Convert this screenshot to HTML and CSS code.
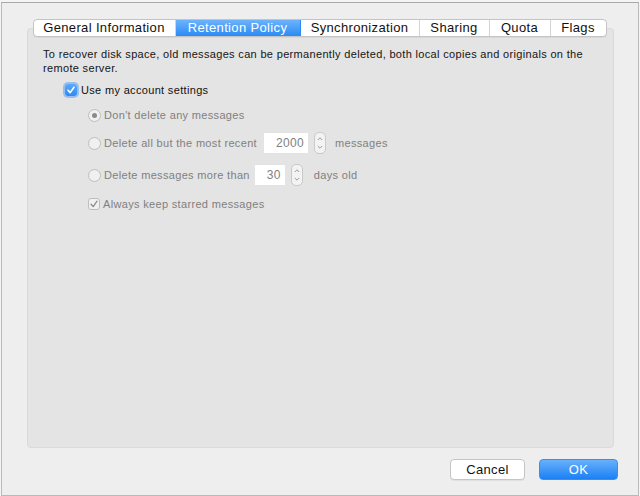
FILE: index.html
```html
<!DOCTYPE html>
<html>
<head>
<meta charset="utf-8">
<link rel="stylesheet" href="styles.css">
</head>
<body>
<div class="dialog">
  <div class="tabs">
    <div class="tab t1">General Information</div>
    <div class="tab t2 sel">Retention Policy</div>
    <div class="tab t3">Synchronization</div>
    <div class="tab t4">Sharing</div>
    <div class="tab t5">Quota</div>
    <div class="tab t6 last">Flags</div>
  </div>
  <div class="panel">
    <p class="desc">To recover disk space, old messages can be permanently deleted, both local copies and originals on the remote server.</p>
    <div class="row main-check">
      <span class="check on">
        <svg width="10" height="10" viewBox="0 0 10 10"><path d="M2 5.2 L4.2 7.6 L8 2.2" fill="none" stroke="#fff" stroke-width="1.6" stroke-linecap="round" stroke-linejoin="round"/></svg>
      </span>
      <span class="label">Use my account settings</span>
    </div>
    <div class="options">
      <div class="row r1">
        <span class="radio selected"><span class="dot"></span></span>
        <span class="label dis">Don't delete any messages</span>
      </div>
      <div class="row r2">
        <span class="radio"></span>
        <span class="label dis">Delete all but the most recent</span>
        <span class="field">2000</span>
        <span class="stepper">
          <svg width="12" height="22" viewBox="0 0 12 22"><path d="M3.8 8 L6 5.8 L8.2 8" fill="none" stroke="#9a9a9a" stroke-width="1"/><path d="M3.8 14 L6 16.2 L8.2 14" fill="none" stroke="#9a9a9a" stroke-width="1"/></svg>
        </span>
        <span class="label dis after">messages</span>
      </div>
      <div class="row r3">
        <span class="radio"></span>
        <span class="label dis">Delete messages more than</span>
        <span class="field">30</span>
        <span class="stepper">
          <svg width="12" height="22" viewBox="0 0 12 22"><path d="M3.8 8 L6 5.8 L8.2 8" fill="none" stroke="#9a9a9a" stroke-width="1"/><path d="M3.8 14 L6 16.2 L8.2 14" fill="none" stroke="#9a9a9a" stroke-width="1"/></svg>
        </span>
        <span class="label dis after">days old</span>
      </div>
      <div class="row r4">
        <span class="check dis-check">
          <svg width="10" height="10" viewBox="0 0 10 10"><path d="M2 5.2 L4.2 7.6 L8 2.2" fill="none" stroke="#8c8c8c" stroke-width="1.3" stroke-linecap="round" stroke-linejoin="round"/></svg>
        </span>
        <span class="label dis">Always keep starred messages</span>
      </div>
    </div>
  </div>
  <div class="buttons">
    <button class="btn cancel">Cancel</button>
    <button class="btn ok">OK</button>
  </div>
</div>
</body>
</html>
```

FILE: styles.css
```css
html, body {
  margin: 0;
  padding: 0;
}
body {
  width: 640px;
  height: 496px;
  background: #f4f4f4;
  font-family: "Liberation Sans", Arial, sans-serif;
  color: #111;
  overflow: hidden;
}
.dialog {
  box-sizing: border-box;
  margin: 2px 1px 0 1px;
  height: 494px;
  border: 1px solid #b9b9b9;
  border-top-color: #a9a9a9;
  background: #eeeeee;
  padding: 16px 24px 0 25px;
  display: flex;
  flex-direction: column;
}
.tabs {
  align-self: center;
  display: flex;
  height: 18px;
  box-sizing: border-box;
  border: 1px solid #c4c4c4;
  border-radius: 4px;
  background: #fff;
  position: relative;
  z-index: 2;
  overflow: hidden;
  box-shadow: 0 1px 0 rgba(0,0,0,0.05);
  margin-left: -2px;
}
.tab {
  font-size: 13px;
  letter-spacing: 0.35px;
  line-height: 16px;
  text-align: center;
  box-sizing: border-box;
  border-right: 1px solid #d4d4d4;
  color: #111;
  white-space: nowrap;
}
.t1 { width: 142px; }
.t2 { width: 125px; }
.t3 { width: 119px; }
.t4 { width: 70px; }
.t5 { width: 61px; }
.t6 { width: 55px; }
.tab.last { border-right: none; }
.tab.sel {
  background: linear-gradient(#6db3fb, #2a8bf6);
  color: #fff;
  border-right-color: #2a8bf6;
}
.panel {
  margin-top: -9px;
  height: 420px;
  box-sizing: border-box;
  border: 1px solid #dadada;
  border-radius: 4px;
  background: #e4e4e4;
  padding: 18px 16px 0 15px;
}
.desc {
  margin: 0;
  font-size: 11px;
  letter-spacing: 0.33px;
  line-height: 14px;
  color: #151515;
}
.row {
  display: flex;
  align-items: center;
  font-size: 11px;
  letter-spacing: 0.33px;
}
.main-check {
  height: 20px;
  margin-top: 5px;
  padding-left: 22px;
}
.check {
  width: 12px;
  height: 12px;
  box-sizing: border-box;
  border-radius: 3px;
  display: flex;
  align-items: center;
  justify-content: center;
  flex: none;
}
.check.on {
  background: linear-gradient(#5aa9fa, #2b8af5);
  box-shadow: 0 0 0 2px rgba(90,160,240,0.55);
}
.check.dis-check {
  background: #f1f1f1;
  border: 1px solid #bdbdbd;
}
.label {
  margin-left: 4px;
  color: #111;
  white-space: nowrap;
}
.r1 .label, .r2 > .label:nth-child(2), .r3 > .label:nth-child(2), .r4 .label { margin-left: 3px; }
.label.dis {
  color: #808080;
}
.options {
  padding-left: 45px;
}
.radio {
  width: 13px;
  height: 13px;
  box-sizing: border-box;
  border-radius: 50%;
  border: 1px solid #bdbdbd;
  background: #f0f0f0;
  display: flex;
  align-items: center;
  justify-content: center;
  flex: none;
}
.radio .dot {
  width: 5px;
  height: 5px;
  border-radius: 50%;
  background: #8a8a8a;
}
.r1 { height: 20px; margin-top: 5px; }
.r2 { height: 22px; margin-top: 7px; }
.r3 { height: 22px; margin-top: 10px; }
.r4 { height: 20px; margin-top: 8px; }
.field {
  background: #fff;
  height: 20px;
  line-height: 20px;
  box-sizing: border-box;
  text-align: right;
  padding-right: 4px;
  color: #7f7f7f;
  font-size: 12px;
  flex: none;
}
.r2 .field { margin-left: 7px; width: 44px; }
.r3 .field { margin-left: 5px; width: 30px; }
.stepper {
  margin-left: 6px;
  width: 12px;
  height: 22px;
  box-sizing: border-box;
  border: 1px solid #c9c9c9;
  border-radius: 5px;
  background: #f3f3f3;
  display: flex;
  align-items: center;
  justify-content: center;
  overflow: hidden;
  flex: none;
}
.stepper svg { flex: none; }
.label.after { margin-left: 9px; }
.r3 .label.after { margin-left: 11px; }
.buttons {
  display: flex;
  justify-content: flex-end;
  gap: 14px;
  margin-top: 11px;
  margin-right: -4px;
}
.btn {
  font-family: "Liberation Sans", Arial, sans-serif;
  font-size: 13px;
  letter-spacing: 0.3px;
  height: 21px;
  box-sizing: border-box;
  border-radius: 4px;
  padding: 0;
  line-height: 19px;
}
.cancel {
  width: 75px;
  background: #fff;
  border: 1px solid #c5c5c5;
  color: #111;
  box-shadow: 0 1px 0 rgba(0,0,0,0.06);
}
.ok {
  width: 79px;
  background: linear-gradient(#68b0fb, #1b80f5);
  border: 1px solid #3b8ef0;
  color: #fff;
}
```
